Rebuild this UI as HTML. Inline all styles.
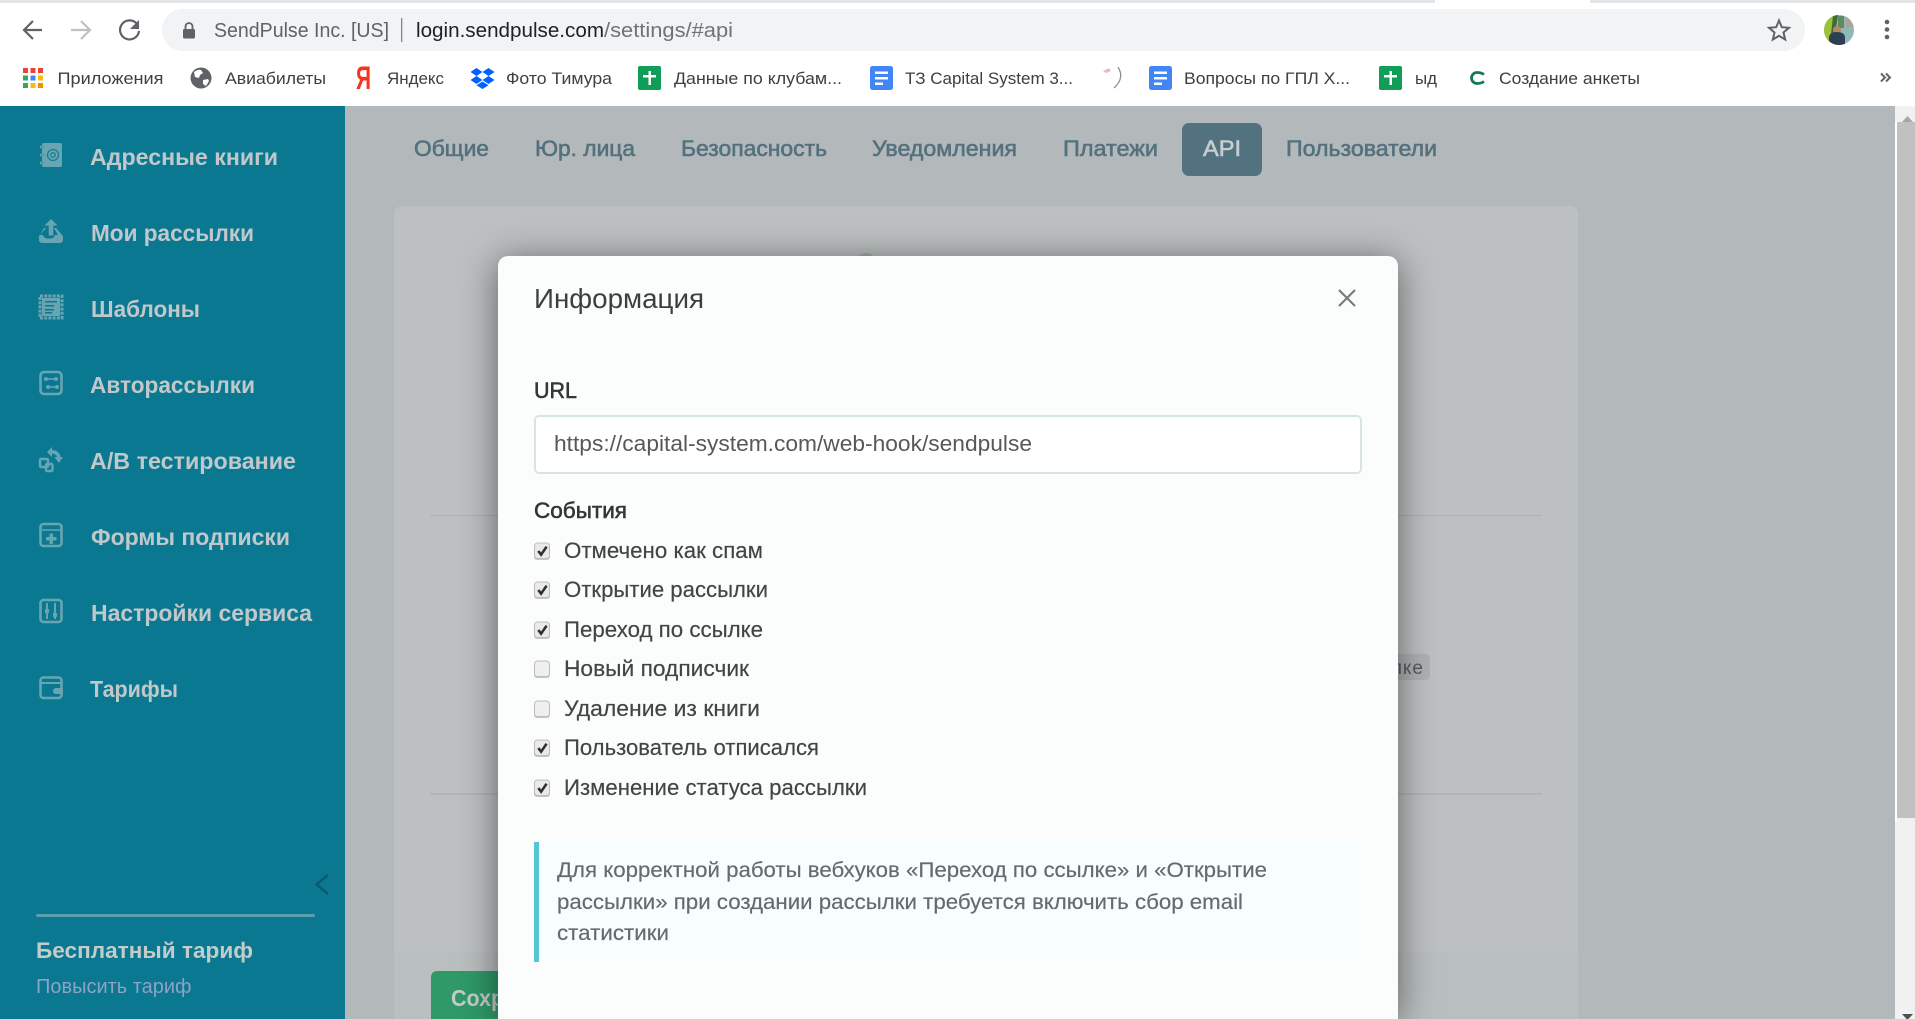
<!DOCTYPE html>
<html lang="ru"><head><meta charset="utf-8"><title>SendPulse API</title>
<style>
html,body{margin:0;padding:0;width:1915px;height:1019px;overflow:hidden;background:#fff}
#page{position:relative;width:1915px;height:1019px;overflow:hidden}
svg{position:absolute;left:0;top:0;display:block}
text{font-family:"Liberation Sans",sans-serif;white-space:pre}
.modal{position:absolute;left:498px;top:256px;width:900px;height:763px;background:#fbfdfc;border-radius:10px 10px 0 0;box-shadow:0 5px 36px rgba(0,0,0,.5)}
.bm{font-size:16.5px;fill:#3c4043}
.nav{font-size:23px;font-weight:bold;fill:#c0c8ca}
.tab{font-size:22px;fill:#54717e;stroke:#54717e;stroke-width:.6}
.ic{fill:#67a5b3}
.ico{fill:none;stroke:#67a5b3;stroke-width:2.6}
.lab{font-size:22px;fill:#424545;stroke:#424545;stroke-width:.18}
.al{font-size:21.5px;fill:#666a6a;stroke:#666a6a;stroke-width:.18}
.sb{font-size:22px;fill:#333636;stroke:#333636;stroke-width:.55}
.cb{fill:#e9e9e9;stroke:#bdbdbd;stroke-width:1}
.cs{fill:#c6c6c6}
.ck{fill:none;stroke:#303030;stroke-width:2.6}
</style></head>
<body>
<div id="page">
<svg width="1915" height="1019" viewBox="0 0 1915 1019" xmlns="http://www.w3.org/2000/svg">
<!-- browser chrome -->
<rect x="0" y="0" width="1915" height="106" fill="#fff"/>
<rect x="0" y="0" width="1915" height="3" fill="#e3e6e9"/>
<rect x="1435" y="0" width="155" height="3" fill="#fff"/>
<rect x="162" y="9" width="1643" height="42" rx="21" fill="#f1f3f4"/>
<g fill="none" stroke="#5f6368" stroke-width="2.2">
<path d="M42 30H25M33 21l-9 9 9 9"/>
<path d="M137 24A9.5 9.5 0 1 0 139 31"/>
</g>
<path d="M139 20v9h-9z" fill="#5f6368"/>
<path d="M71 30h18M81 21l9 9-9 9" fill="none" stroke="#bdc1c6" stroke-width="2.2"/>
<rect x="183" y="29" width="12" height="9.500" rx="1.200" fill="#5f6368"/>
<path d="M185.500 29v-2.500a3.500 3.500 0 0 1 7 0v2.500" fill="none" stroke="#5f6368" stroke-width="1.800"/>
<text x="214" y="37" font-size="20" fill="#5f6368" textLength="175" lengthAdjust="spacingAndGlyphs">SendPulse Inc. [US]</text>
<rect x="401" y="18" width="1.300" height="24" fill="#80868b"/>
<text x="416" y="37" font-size="20" fill="#202124" textLength="188" lengthAdjust="spacingAndGlyphs">login.sendpulse.com</text>
<text x="604" y="37" font-size="20" fill="#6f7377" textLength="129" lengthAdjust="spacingAndGlyphs">/settings/#api</text>
<path d="M1779 20.500l2.800 6.700 7.200.6-5.500 4.700 1.700 7-6.200-3.700-6.200 3.700 1.700-7-5.500-4.700 7.200-.6z" fill="none" stroke="#5f6368" stroke-width="2"/>
<defs><clipPath id="av"><circle cx="1839" cy="30" r="15"/></clipPath></defs>
<g clip-path="url(#av)">
<rect x="1824" y="15" width="30" height="30" fill="#8fb8b8"/>
<rect x="1824" y="15" width="9" height="30" fill="#9cc23a"/>
<path d="M1833 15h5l-3 20h-4z" fill="#3f6b3a"/>
<rect x="1846" y="15" width="8" height="12" fill="#a9a39a"/>
<path d="M1838 16h6v12h-6z" fill="#5e8a62"/>
<circle cx="1837" cy="30" r="4" fill="#b68a62"/>
<path d="M1829 46v-8q0-6 8-6t8 6v8z" fill="#2d3f55"/>
</g>
<circle cx="1887" cy="22" r="2.300" fill="#5f6368"/><circle cx="1887" cy="29.500" r="2.300" fill="#5f6368"/><circle cx="1887" cy="37" r="2.300" fill="#5f6368"/>
<!-- bookmarks -->
<g>
<rect x="23" y="68" width="5" height="5" fill="#ea4335"/><rect x="30.500" y="68" width="5" height="5" fill="#ea4335"/><rect x="38" y="68" width="5" height="5" fill="#ea4335"/>
<rect x="23" y="75.500" width="5" height="5" fill="#34a853"/><rect x="30.500" y="75.500" width="5" height="5" fill="#4285f4"/><rect x="38" y="75.500" width="5" height="5" fill="#fbbc05"/>
<rect x="23" y="83" width="5" height="5" fill="#34a853"/><rect x="30.500" y="83" width="5" height="5" fill="#fbbc05"/><rect x="38" y="83" width="5" height="5" fill="#fb8c00"/>
</g>
<text class="bm" x="57.500" y="84" textLength="106" lengthAdjust="spacingAndGlyphs">Приложения</text>
<circle cx="201" cy="78" r="10.500" fill="#5f6368"/>
<path d="M194 72q4-3 7-2l2 3-3 2-1 3-4-1zM203 80l5-1 1 2-3 5-3-2z" fill="#fff"/>
<text class="bm" x="225" y="84" textLength="101" lengthAdjust="spacingAndGlyphs">Авиабилеты</text>
<text x="356" y="89" font-size="32" font-weight="bold" fill="#f5341f" textLength="15" lengthAdjust="spacingAndGlyphs">Я</text>
<text class="bm" x="387" y="84" textLength="57" lengthAdjust="spacingAndGlyphs">Яндекс</text>
<g fill="#0061ff">
<path d="M476.500 68l6 4-6 4-6-4zM488.500 68l6 4-6 4-6-4zM476.500 76l6 4-6 4-6-4zM488.500 76l6 4-6 4-6-4zM482.500 81.500l6 3.800-6 3.700-6-3.700z"/>
</g>
<text class="bm" x="506" y="84" textLength="106" lengthAdjust="spacingAndGlyphs">Фото Тимура</text>
<rect x="638" y="66" width="23" height="24" rx="2" fill="#0f9d58"/>
<path d="M643 75h13v2.500h-13zM648.500 71h2.500v14h-2.500z" fill="#fff"/>
<text class="bm" x="674" y="84" textLength="168" lengthAdjust="spacingAndGlyphs">Данные по клубам...</text>
<rect x="870" y="66" width="23" height="24" rx="2.500" fill="#4285f4"/>
<path d="M875 71.500h13v2.500h-13zM875 77h13v2.500h-13zM875 82.500h8v2.500h-8z" fill="#fff"/>
<text class="bm" x="905" y="84" textLength="168" lengthAdjust="spacingAndGlyphs">ТЗ Capital System 3...</text>
<path d="M1118 67q7 11-4 21" fill="none" stroke="#8a8a8a" stroke-width="1.200"/>
<path d="M1103 71l6-3 2 3-5 2z" fill="#efb6c0"/>
<rect x="1149" y="66" width="23" height="24" rx="2.500" fill="#4285f4"/>
<path d="M1154 71.500h13v2.500h-13zM1154 77h13v2.500h-13zM1154 82.500h8v2.500h-8z" fill="#fff"/>
<text class="bm" x="1184" y="84" textLength="166" lengthAdjust="spacingAndGlyphs">Вопросы по ГПЛ Х...</text>
<rect x="1379" y="66" width="23" height="24" rx="2" fill="#0f9d58"/>
<path d="M1384 75h13v2.500h-13zM1389.500 71h2.500v14h-2.500z" fill="#fff"/>
<text class="bm" x="1415" y="84" textLength="22" lengthAdjust="spacingAndGlyphs">ыд</text>
<path d="M1484 74.500q-3-2-7-2a5.500 5.500 0 0 0 0 11q4 0 7-2" fill="none" stroke="#137a5c" stroke-width="2.800"/>
<text class="bm" x="1499" y="84" textLength="141" lengthAdjust="spacingAndGlyphs">Создание анкеты</text>
<path d="M1881 73.500l4 4-4 4M1886 73.500l4 4-4 4" fill="none" stroke="#5f6368" stroke-width="2"/>

<!-- main -->
<rect x="345" y="106" width="1550" height="913" fill="#b3b8bb"/>
<rect x="394" y="206" width="1184" height="813" rx="8" fill="#bcc0c1"/>
<rect x="394" y="952" width="1184" height="67" fill="#b9bebe"/>
<text class="tab" x="414" y="156" textLength="75" lengthAdjust="spacingAndGlyphs">Общие</text>
<text class="tab" x="535" y="156" textLength="100" lengthAdjust="spacingAndGlyphs">Юр. лица</text>
<text class="tab" x="681" y="156" textLength="146" lengthAdjust="spacingAndGlyphs">Безопасность</text>
<text class="tab" x="872" y="156" textLength="145" lengthAdjust="spacingAndGlyphs">Уведомления</text>
<text class="tab" x="1063" y="156" textLength="95" lengthAdjust="spacingAndGlyphs">Платежи</text>
<rect x="1182" y="123" width="80" height="53" rx="7" fill="#537280"/>
<text x="1203" y="156" font-size="22" fill="#c6ced0" stroke="#c6ced0" stroke-width=".6" textLength="38" lengthAdjust="spacingAndGlyphs">API</text>
<text class="tab" x="1286" y="156" textLength="151" lengthAdjust="spacingAndGlyphs">Пользователи</text>
<rect x="430" y="515" width="1112" height="1" fill="#a8b3b3"/>
<rect x="430" y="793" width="1112" height="2" fill="#b0b5b5"/>
<circle cx="866" cy="264" r="11" fill="#9fb39a"/>
<rect x="1300" y="654" width="130" height="26" rx="4" fill="#aeb2b3"/>
<text x="1424" y="674" font-size="19" fill="#5a5a60" text-anchor="end" letter-spacing="1">ылке</text>
<rect x="431" y="971" width="300" height="60" rx="6" fill="#2f9968"/>
<text x="451" y="1006" font-size="23" font-weight="bold" fill="#c5ccc8" textLength="115" lengthAdjust="spacingAndGlyphs">Сохранить</text>

<!-- sidebar -->
<rect x="0" y="106" width="345" height="913" fill="#0b7892"/>
<text class="nav" x="90" y="165" textLength="188" lengthAdjust="spacingAndGlyphs">Адресные книги</text>
<text class="nav" x="91" y="241" textLength="163" lengthAdjust="spacingAndGlyphs">Мои рассылки</text>
<text class="nav" x="91" y="317" textLength="109" lengthAdjust="spacingAndGlyphs">Шаблоны</text>
<text class="nav" x="90" y="393" textLength="165" lengthAdjust="spacingAndGlyphs">Авторассылки</text>
<text class="nav" x="90" y="469" textLength="206" lengthAdjust="spacingAndGlyphs">А/В тестирование</text>
<text class="nav" x="91" y="545" textLength="199" lengthAdjust="spacingAndGlyphs">Формы подписки</text>
<text class="nav" x="91" y="621" textLength="221" lengthAdjust="spacingAndGlyphs">Настройки сервиса</text>
<text class="nav" x="90" y="697" textLength="88" lengthAdjust="spacingAndGlyphs">Тарифы</text>
<!-- icon 1 address book -->
<rect x="42" y="143" width="20" height="24" rx="2" class="ic"/>
<path d="M40 147h4M40 155h4M40 163h4" stroke="#67a5b3" stroke-width="2.500"/>
<path d="M41.500 147h2M41.500 155h2M41.500 163h2" stroke="#0b7892" stroke-width=".8"/>
<circle cx="53" cy="155" r="5.500" fill="none" stroke="#0b7892" stroke-width="1.100"/><circle cx="53" cy="155" r="2.300" fill="none" stroke="#0b7892" stroke-width="1.100"/>
<!-- icon 2 tray -->
<path d="M46 228l-7 8v4a3 3 0 0 0 3 3h18a3 3 0 0 0 3-3v-4l-7-8h-2l4 7h-3a5 5 0 0 1-4 3.500h-4a5 5 0 0 1-4-3.500h-3l4-7z" class="ic"/>
<path d="M51 219l6.500 6.500h-4.200v10h-4.600v-10h-4.200z" class="ic"/>
<!-- icon 3 stamp -->
<path d="M40 296h22v22h-22z" fill="none" stroke="#67a5b3" stroke-width="3" stroke-dasharray="3 1.200"/>
<rect x="42" y="298" width="18" height="18" fill="#67a5b3"/>
<path d="M45 301h12v1.500h-12zM45 305h9v1.500h-9zM45 309h9v1.500h-9zM45 312h7v1.500h-7z" fill="#0b7892"/>
<!-- icon 4 automation -->
<rect x="40.500" y="372" width="21" height="22" rx="3.500" class="ico"/>
<circle cx="46" cy="379" r="2" fill="#67a5b3"/><circle cx="56" cy="379" r="2" fill="#67a5b3"/><path d="M46 379h10" stroke="#67a5b3" stroke-width="1.600"/>
<circle cx="48" cy="387" r="2" fill="#67a5b3"/><circle cx="57" cy="387" r="2" fill="#67a5b3"/><path d="M48 387h9" stroke="#67a5b3" stroke-width="1.600"/>
<!-- icon 5 ab -->
<rect x="40" y="459" width="8" height="8" rx="1" fill="none" stroke="#67a5b3" stroke-width="2.400"/>
<rect x="46" y="464" width="6.500" height="7" rx="1" fill="none" stroke="#67a5b3" stroke-width="2.400"/>
<path d="M50 452q8-1 9 6" fill="none" stroke="#67a5b3" stroke-width="3.400"/>
<path d="M52 447v10l-5-5zM54.500 457h8.500l-4.200 6z" class="ic"/>
<!-- icon 6 form -->
<rect x="40.500" y="524" width="21" height="22" rx="3" class="ico"/>
<path d="M42 530h18" stroke="#67a5b3" stroke-width="1.500"/>
<path d="M49.500 533.500h3.500v3.500h3.500v3.500h-3.500v3.500h-3.500v-3.500h-3.500v-3.500h3.500z" class="ic"/>
<!-- icon 7 sliders -->
<rect x="40.500" y="600" width="21" height="22" rx="3" class="ico"/>
<path d="M47 603v16M55 603v16" stroke="#67a5b3" stroke-width="2"/>
<rect x="45" y="609" width="4" height="4" fill="#67a5b3"/><rect x="53" y="613" width="4" height="4" fill="#67a5b3"/>
<!-- icon 8 wallet -->
<rect x="40.500" y="677.500" width="21" height="20.500" rx="3" class="ico"/>
<path d="M41 683h20" stroke="#67a5b3" stroke-width="2"/>
<path d="M56 688h7v6h-7a3 3 0 0 1 0-6z" class="ic"/>
<path d="M328 875l-11.500 9.500L328 894" fill="none" stroke="#0a5a72" stroke-width="2.600"/>
<rect x="36" y="914" width="279" height="3" rx="1.500" fill="#5c9fae"/>
<text x="36" y="958" font-size="22" font-weight="bold" fill="#c4cccb" textLength="217" lengthAdjust="spacingAndGlyphs">Бесплатный тариф</text>
<text x="36" y="993" font-size="20" fill="#8ca3c6" textLength="155.500" lengthAdjust="spacingAndGlyphs">Повысить тариф</text>

<!-- scrollbar -->
<rect x="1895" y="106" width="20" height="913" fill="#f1f1f1"/>
<rect x="1895" y="122" width="2" height="700" fill="#ffffff"/>
<rect x="1897" y="122" width="18" height="696" fill="#c1c1c1"/>
<path d="M1902 122h11l-5.500-6z" fill="#a8a8a8"/>
<path d="M1902 1014h11l-5.500 6z" fill="#505050"/>
</svg>

<div class="modal"></div>

<svg width="1915" height="1019" viewBox="0 0 1915 1019" xmlns="http://www.w3.org/2000/svg">
<text x="534" y="308" font-size="28" fill="#3c3f3f" textLength="170" lengthAdjust="spacingAndGlyphs">Информация</text>
<path d="M1339 290l16 16M1355 290l-16 16" stroke="#75797a" stroke-width="2.100" fill="none"/>
<text class="sb" x="534" y="398" textLength="43" lengthAdjust="spacingAndGlyphs">URL</text>
<rect x="535" y="416" width="826" height="57" rx="4" fill="#fff" stroke="#d7e4e4" stroke-width="2"/>
<text x="554" y="451" font-size="22" fill="#555959" textLength="478" lengthAdjust="spacingAndGlyphs">https://capital-system.com/web-hook/sendpulse</text>
<text class="sb" x="534" y="518" textLength="93" lengthAdjust="spacingAndGlyphs">События</text>

<rect class="cs" x="534" y="544" width="16" height="16" rx="3"/><rect class="cb" x="534.500" y="543" width="15" height="15.500" rx="3"/><path class="ck" d="M538.300 551l2.800 3.700 5.500-8"/>
<text class="lab" x="564" y="558" textLength="199" lengthAdjust="spacingAndGlyphs">Отмечено как спам</text>
<rect class="cs" x="534" y="583" width="16" height="16" rx="3"/><rect class="cb" x="534.500" y="582" width="15" height="15.500" rx="3"/><path class="ck" d="M538.300 590l2.800 3.700 5.500-8"/>
<text class="lab" x="564" y="597" textLength="204" lengthAdjust="spacingAndGlyphs">Открытие рассылки</text>
<rect class="cs" x="534" y="623" width="16" height="16" rx="3"/><rect class="cb" x="534.500" y="622" width="15" height="15.500" rx="3"/><path class="ck" d="M538.300 630l2.800 3.700 5.500-8"/>
<text class="lab" x="564" y="637" textLength="199" lengthAdjust="spacingAndGlyphs">Переход по ссылке</text>
<rect class="cs" x="534" y="662" width="16" height="16" rx="3"/><rect class="cb" x="534.500" y="661" width="15" height="15.500" rx="3" style="fill:#efefef"/>
<text class="lab" x="564" y="676" textLength="185" lengthAdjust="spacingAndGlyphs">Новый подписчик</text>
<rect class="cs" x="534" y="702" width="16" height="16" rx="3"/><rect class="cb" x="534.500" y="701" width="15" height="15.500" rx="3" style="fill:#efefef"/>
<text class="lab" x="564" y="716" textLength="196" lengthAdjust="spacingAndGlyphs">Удаление из книги</text>
<rect class="cs" x="534" y="741" width="16" height="16" rx="3"/><rect class="cb" x="534.500" y="740" width="15" height="15.500" rx="3"/><path class="ck" d="M538.300 748l2.800 3.700 5.500-8"/>
<text class="lab" x="564" y="755" textLength="255" lengthAdjust="spacingAndGlyphs">Пользователь отписался</text>
<rect class="cs" x="534" y="781" width="16" height="16" rx="3"/><rect class="cb" x="534.500" y="780" width="15" height="15.500" rx="3"/><path class="ck" d="M538.300 788l2.800 3.700 5.500-8"/>
<text class="lab" x="564" y="795" textLength="303" lengthAdjust="spacingAndGlyphs">Изменение статуса рассылки</text>

<rect x="534" y="842" width="829" height="120" fill="#f8fdff"/>
<rect x="534" y="842" width="5" height="120" fill="#58c5d2"/>
<text class="al" x="557" y="877" textLength="710" lengthAdjust="spacingAndGlyphs">Для корректной работы вебхуков «Переход по ссылке» и «Открытие</text>
<text class="al" x="557" y="909" textLength="686" lengthAdjust="spacingAndGlyphs">рассылки» при создании рассылки требуется включить сбор email</text>
<text class="al" x="557" y="940" textLength="112" lengthAdjust="spacingAndGlyphs">статистики</text>
</svg>
</div>
</body></html>
